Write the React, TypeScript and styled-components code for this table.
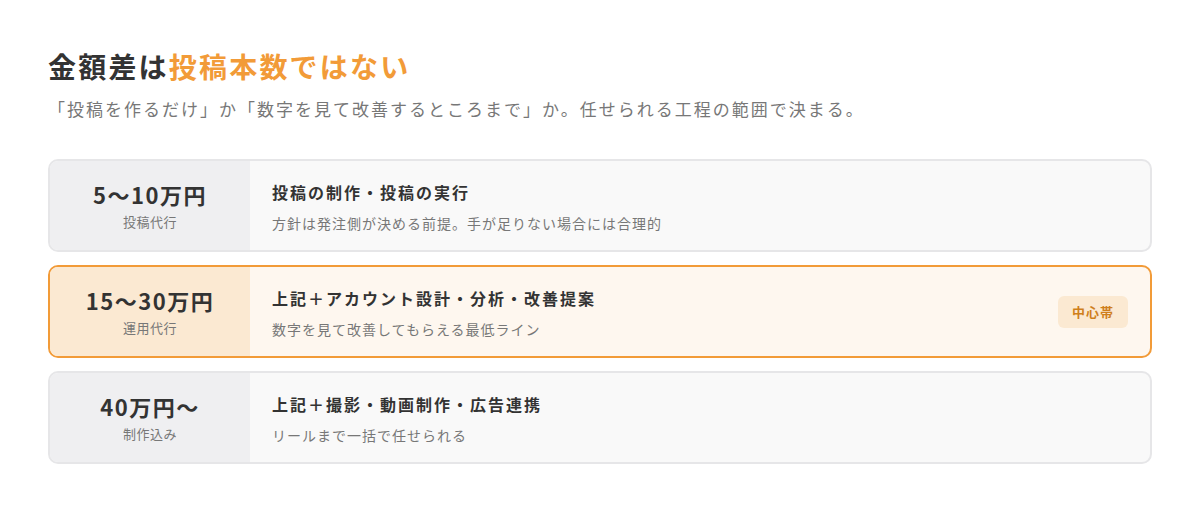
import React from "react";
import styled, { createGlobalStyle } from "styled-components";

const Global = createGlobalStyle`
  html, body { margin: 0; padding: 0; background: #ffffff; }
  body { font-family: "Noto Sans CJK JP", "Noto Sans", sans-serif; color: #333; }
`;

const Page = styled.div`
  padding: 44px 48px 40px;
  box-sizing: border-box;
  width: 1200px;
`;

const Title = styled.h2`
  margin: 0;
  font-size: 28px;
  line-height: 44px;
  font-weight: 700;
  color: #333333;
  letter-spacing: 2.2px;
`;

const Accent = styled.span`
  color: #f29b38;
`;

const Lead = styled.p`
  margin: 8px 0 0;
  font-size: 17px;
  line-height: 26px;
  color: #777777;
  letter-spacing: 2px;
`;

const List = styled.div`
  margin-top: 37px;
  display: flex;
  flex-direction: column;
  gap: 13px;
`;

const Card = styled.div<{ $hl?: boolean }>`
  display: grid;
  grid-template-columns: 200px 1fr;
  height: 93px;
  box-sizing: border-box;
  border: 2px solid ${(p) => (p.$hl ? "#f29b38" : "#e6e6e8")};
  border-radius: 10px;
  overflow: hidden;
  background: ${(p) => (p.$hl ? "#fef7ef" : "#f9f9f9")};
`;

const PriceCol = styled.div<{ $hl?: boolean }>`
  display: flex;
  flex-direction: column;
  align-items: center;
  justify-content: center;
  background: ${(p) => (p.$hl ? "#fbe9d2" : "#efeff1")};
`;

const Price = styled.div`
  font-size: 22px;
  line-height: 28px;
  font-weight: 700;
  color: #333333;
  letter-spacing: 1.5px;
`;

const PriceLabel = styled.div`
  margin-top: 5px;
  font-size: 13px;
  line-height: 18px;
  color: #777777;
  letter-spacing: 0.5px;
`;

const Body = styled.div`
  display: flex;
  align-items: center;
  justify-content: space-between;
  padding: 0 22px;
`;

const Texts = styled.div`
  display: flex;
  flex-direction: column;
`;

const ItemTitle = styled.div`
  font-size: 16px;
  line-height: 24px;
  font-weight: 700;
  color: #333333;
  letter-spacing: 2px;
`;

const ItemDesc = styled.div`
  margin-top: 10px;
  font-size: 14px;
  line-height: 18px;
  color: #777777;
  letter-spacing: 1px;
`;

const Badge = styled.span`
  display: inline-flex;
  align-items: center;
  justify-content: center;
  width: 70px;
  height: 32px;
  border-radius: 6px;
  background: #fbe9d2;
  color: #cf7f1c;
  font-size: 13px;
  font-weight: 700;
  letter-spacing: 1px;
`;

type Row = {
  price: string;
  label: string;
  title: string;
  desc: string;
  hl?: boolean;
  badge?: string;
};

const rows: Row[] = [
  {
    price: "5〜10万円",
    label: "投稿代行",
    title: "投稿の制作・投稿の実行",
    desc: "方針は発注側が決める前提。手が足りない場合には合理的",
  },
  {
    price: "15〜30万円",
    label: "運用代行",
    title: "上記＋アカウント設計・分析・改善提案",
    desc: "数字を見て改善してもらえる最低ライン",
    hl: true,
    badge: "中心帯",
  },
  {
    price: "40万円〜",
    label: "制作込み",
    title: "上記＋撮影・動画制作・広告連携",
    desc: "リールまで一括で任せられる",
  },
];

export default function App() {
  return (
    <>
      <Global />
      <Page>
        <Title>
          金額差は<Accent>投稿本数ではない</Accent>
        </Title>
        <Lead>
          「投稿を作るだけ」か「数字を見て改善するところまで」か。任せられる工程の範囲で決まる。
        </Lead>
        <List>
          {rows.map((r) => (
            <Card key={r.price} $hl={r.hl}>
              <PriceCol $hl={r.hl}>
                <Price>{r.price}</Price>
                <PriceLabel>{r.label}</PriceLabel>
              </PriceCol>
              <Body>
                <Texts>
                  <ItemTitle>{r.title}</ItemTitle>
                  <ItemDesc>{r.desc}</ItemDesc>
                </Texts>
                {r.badge && <Badge>{r.badge}</Badge>}
              </Body>
            </Card>
          ))}
        </List>
      </Page>
    </>
  );
}
